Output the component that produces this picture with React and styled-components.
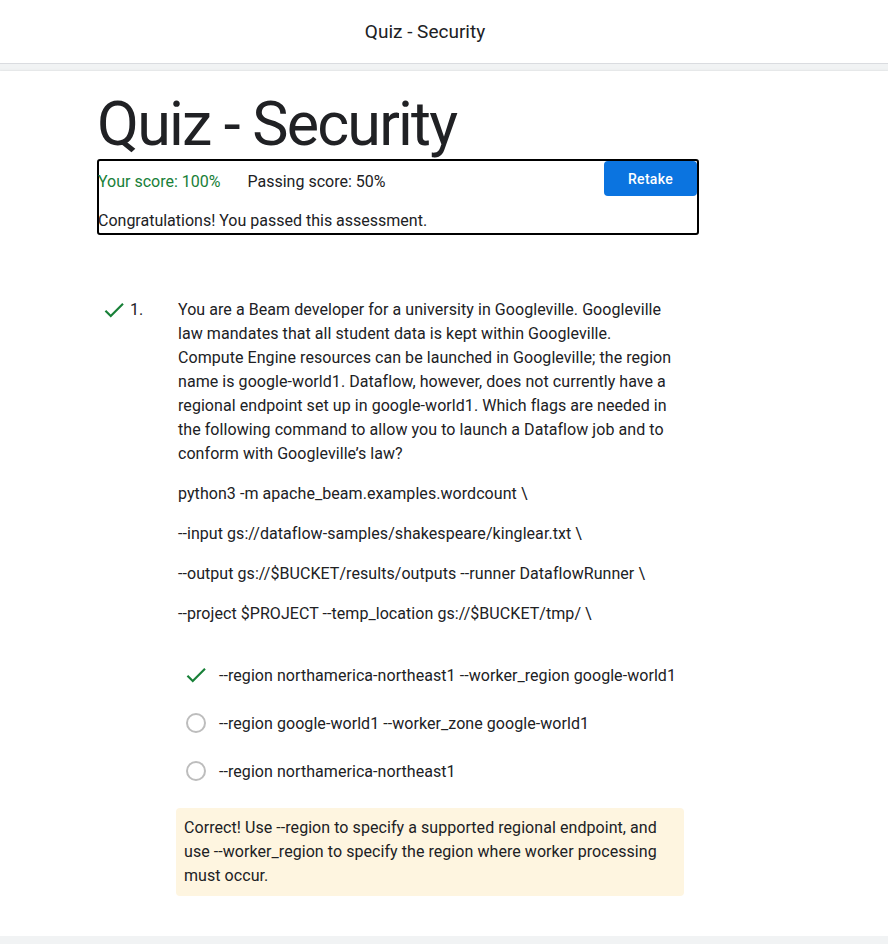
import styled, { createGlobalStyle } from "styled-components"

const GlobalStyle = createGlobalStyle`
    body {
        margin: 0;
        background: #f1f3f4;
        font-family: Roboto, "Liberation Sans", sans-serif;
        color: #202124;
    }
`

const options = [
    { text: "--region northamerica-northeast1 --worker_region google-world1", picked: true },
    { text: "--region google-world1 --worker_zone google-world1", picked: false },
    { text: "--region northamerica-northeast1", picked: false },
]

const command = [
    "python3 -m apache_beam.examples.wordcount \\",
    "--input gs://dataflow-samples/shakespeare/kinglear.txt \\",
    "--output gs://$BUCKET/results/outputs --runner DataflowRunner \\",
    "--project $PROJECT --temp_location gs://$BUCKET/tmp/ \\",
]

const Check = ({ size = 26 }) => (
    <svg width={size} height={size} viewBox="0 0 24 24">
        <path d="M9 16.2L4.8 12l-1.4 1.4L9 19 21 7l-1.4-1.4L9 16.2z" fill="#188038" />
    </svg>
)

const App = () => {
    return (
        <>
            <GlobalStyle />
            <Header>Quiz - Security</Header>
            <Card>
                <Content>
                    <Title>Quiz - Security</Title>
                    <ScoreBox>
                        <ScoreRow>
                            <Score $pass>Your score: 100%</Score>
                            <Score>Passing score: 50%</Score>
                            <RetakeButton>Retake</RetakeButton>
                        </ScoreRow>
                        <Message>Congratulations! You passed this assessment.</Message>
                    </ScoreBox>

                    <Question>
                        <QuestionMark>
                            <Check />
                            <span>1.</span>
                        </QuestionMark>
                        <QuestionBody>
                            <Para>
                                You are a Beam developer for a university in Googleville. Googleville
                                law mandates that all student data is kept within Googleville.
                                Compute Engine resources can be launched in Googleville; the region
                                name is google-world1. Dataflow, however, does not currently have a
                                regional endpoint set up in google-world1. Which flags are needed in
                                the following command to allow you to launch a Dataflow job and to
                                conform with Googleville’s law?
                            </Para>
                            {command.map((line) => (
                                <Para key={line}>{line}</Para>
                            ))}
                            <Options>
                                {options.map((o) => (
                                    <Option key={o.text}>
                                        <OptionIcon>{o.picked ? <Check /> : <Radio />}</OptionIcon>
                                        <span>{o.text}</span>
                                    </Option>
                                ))}
                            </Options>
                            <Feedback>
                                Correct! Use --region to specify a supported regional endpoint, and
                                use --worker_region to specify the region where worker processing
                                must occur.
                            </Feedback>
                        </QuestionBody>
                    </Question>
                </Content>
            </Card>
        </>
    )
}

const Header = styled.div`
    height: 63px;
    background: #fff;
    border-bottom: 1px solid #dadce0;
    display: flex;
    align-items: center;
    justify-content: center;
    padding-right: 38px;
    font-size: 19px;
    color: #202124;
`

const Card = styled.div`
    margin-top: 7px;
    background: #fff;
    height: 865px;
    box-shadow: 0 1px 2px rgba(60, 64, 67, 0.3), 0 2px 4px 1px rgba(60, 64, 67, 0.15);
`

const Content = styled.div`
    padding: 19px 0 0 97px;
    width: 602px;
`

const Title = styled.h1`
    margin: 0;
    font-family: Roboto, sans-serif;
    font-weight: 400;
    font-size: 61px;
    line-height: 69px;
    letter-spacing: -1.8px;
    color: #202124;
`

const ScoreBox = styled.div`
    border: 2px solid #000;
    border-radius: 3px;
    box-sizing: border-box;
    height: 76px;
`

const ScoreRow = styled.div`
    display: flex;
    align-items: flex-start;
    height: 40px;
`

const Score = styled.span`
    font-size: 16px;
    line-height: 20px;
    margin-top: 11px;
    margin-right: 28px;
    margin-left: -1px;
    color: ${(p) => (p.$pass ? "#188038" : "#202124")};
`

const RetakeButton = styled.button`
    margin-left: auto;
    width: 93px;
    height: 35px;
    border: none;
    border-radius: 4px;
    background: #0b74e0;
    color: #fff;
    font-family: Roboto, sans-serif;
    font-size: 14px;
    font-weight: 500;
    letter-spacing: 0.3px;
`

const Message = styled.div`
    font-size: 16px;
    line-height: 20px;
    margin-top: 10px;
    margin-left: -1px;
`

const Question = styled.div`
    display: flex;
    margin-top: 63px;
`

const QuestionMark = styled.div`
    width: 81px;
    box-sizing: border-box;
    flex-shrink: 0;
    display: flex;
    align-items: flex-start;
    gap: 3px;
    padding-left: 4px;
    font-size: 16px;
    line-height: 24px;
    svg {
        margin-top: -1px;
    }
`

const QuestionBody = styled.div`
    width: 496px;
    flex-shrink: 0;
    letter-spacing: 0.06px;
`

const Para = styled.p`
    margin: 0 0 16px;
    font-size: 16px;
    line-height: 24px;
`

const Options = styled.div`
    margin-top: 25px;
`

const Option = styled.div`
    display: flex;
    align-items: center;
    height: 48px;
    font-size: 16px;
    white-space: nowrap;
`

const OptionIcon = styled.div`
    width: 36px;
    flex-shrink: 0;
    margin-right: 5px;
    display: flex;
    justify-content: center;
`

const Radio = styled.span`
    width: 16px;
    height: 16px;
    border: 2px solid #bdbdbd;
    border-radius: 50%;
`

const Feedback = styled.div`
    margin: 13px 0 0 -2px;
    width: 508px;
    box-sizing: border-box;
    background: #fef5e0;
    border-radius: 4px;
    padding: 8px;
    font-size: 16px;
    line-height: 24px;
`

export default App
